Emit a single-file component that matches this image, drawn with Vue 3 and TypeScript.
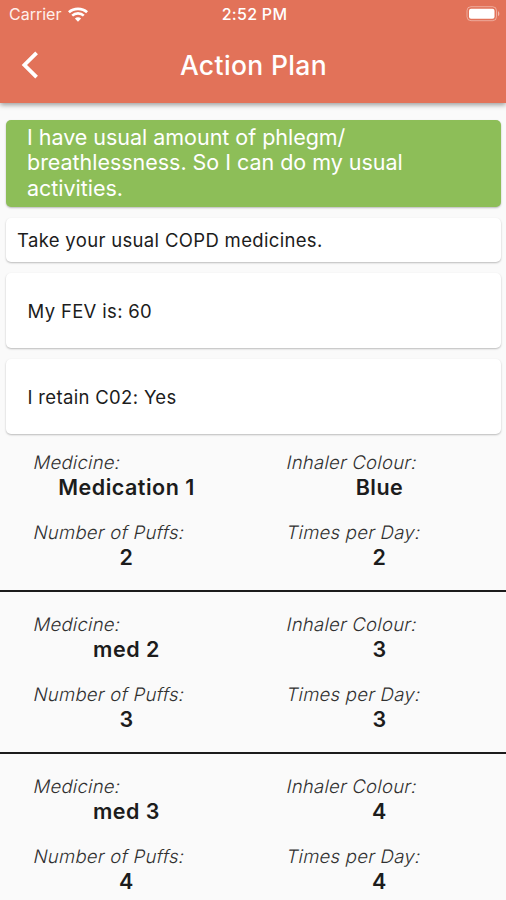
<script setup lang="ts">
interface Medicine {
  name: string
  colour: string
  puffs: string
  times: string
}

const summary: string[] = ['I have usual amount of phlegm/', 'breathlessness. So I can do my usual', 'activities.']

const medicines: Medicine[] = [
  { name: 'Medication 1', colour: 'Blue', puffs: '2', times: '2' },
  { name: 'med 2', colour: '3', puffs: '3', times: '3' },
  { name: 'med 3', colour: '4', puffs: '4', times: '4' },
]
</script>

<template>
  <div class="screen">
    <header class="app-bar">
      <div class="status">
        <div class="network">
          <span class="carrier">Carrier</span>
          <svg class="wifi" width="20" height="15" viewBox="0 0 20 15" fill="none" stroke="#fff">
            <path d="M.9 5.2C5.800.7 14.200.7 19.100 5.200" stroke-width="2.800" />
            <path d="M4.200 8.600c3.200-3 8.400-3 11.600 0" stroke-width="2.600" />
            <path d="M6.900 11.400c1.800-1.600 4.400-1.600 6.200 0L10 14.700z" fill="#fff" stroke="none" />
          </svg>
        </div>
        <span class="clock">2:52 PM</span>
        <svg class="battery" width="34" height="16" viewBox="0 0 34 16">
          <rect x="1" y=".7" width="29.500" height="14" rx="4" fill="none" stroke="#fff" stroke-opacity=".4" />
          <rect x="3" y="2.700" width="25.500" height="10" rx="2" fill="#fff" />
          <path d="M32 5.300c1.800.6 1.800 4.200 0 4.800z" fill="#fff" fill-opacity=".5" />
        </svg>
      </div>
      <div class="toolbar">
        <button class="back" aria-label="Back">
          <svg width="18" height="28" viewBox="0 0 18 28" fill="none" stroke="#fff" stroke-width="3.800">
            <path d="M16.600 1.800 4.400 14l12.200 12.200" />
          </svg>
        </button>
        <h1 class="title">Action Plan</h1>
      </div>
    </header>

    <main>
      <section class="cards">
        <p class="card status-card">
          <span v-for="line in summary" :key="line">{{ line }}</span>
        </p>
        <p class="card advice">Take your usual COPD medicines.</p>
        <p class="card fact">My FEV is: 60</p>
        <p class="card fact">I retain C02: Yes</p>
      </section>

      <section v-for="item in medicines" :key="item.name" class="medicine">
        <div class="field">
          <span class="label">Medicine:</span>
          <span class="value">{{ item.name }}</span>
        </div>
        <div class="field">
          <span class="label">Inhaler Colour:</span>
          <span class="value">{{ item.colour }}</span>
        </div>
        <div class="field">
          <span class="label">Number of Puffs:</span>
          <span class="value">{{ item.puffs }}</span>
        </div>
        <div class="field">
          <span class="label">Times per Day:</span>
          <span class="value">{{ item.times }}</span>
        </div>
      </section>
    </main>
  </div>
</template>

<style>
body {
  margin: 0;
  background: #fafafa;
}
</style>

<style scoped>
.screen {
  height: 900px;
  overflow: hidden;
  background: #fafafa;
  color: #1c1c1c;
  font-family: Inter, "Liberation Sans", sans-serif;
}
.app-bar {
  height: 102.500px;
  background: #e27259;
  color: #fff;
  box-shadow: 0 2px 5px rgba(0, 0, 0, 0.38);
  position: relative;
}
.status {
  height: 28px;
  display: grid;
  grid-template-columns: 1fr auto 1fr;
  align-items: center;
  padding: 0 6px 0 9px;
}
.network {
  display: flex;
  align-items: center;
  gap: 7px;
}
.carrier {
  font-size: 16px;
  color: #fff0ec;
}
.clock {
  font-size: 16px;
  font-weight: 500;
  letter-spacing: 0.3px;
}
.battery {
  justify-self: end;
}
.toolbar {
  height: 74px;
  display: grid;
  grid-template-columns: 60px 1fr 60px;
  align-items: center;
}
.back {
  margin: 0 0 0 20px;
  padding: 0;
  border: 0;
  background: none;
  width: 18px;
  height: 28px;
}
.title {
  margin: 0;
  padding-left: 1px;
  text-align: center;
  font-size: 26.500px;
  font-weight: 500;
  letter-spacing: 0.35px;
}
.cards {
  padding: 17px 5px 0 6px;
  display: flex;
  flex-direction: column;
  gap: 11px;
}
.card {
  margin: 0;
  border-radius: 5px;
  background: #fff;
  box-shadow: 0 1px 2px rgba(0, 0, 0, 0.26);
  font-size: 18.500px;
  letter-spacing: 0.33px;
  display: flex;
  align-items: center;
  white-space: nowrap;
}
.status-card {
  height: 87.500px;
  box-sizing: border-box;
  padding: 5px 21px;
  flex-direction: column;
  align-items: flex-start;
  background: #8dbe58;
  color: #fff;
  font-size: 21.500px;
  line-height: 25.700px;
  letter-spacing: -0.03px;
}
.advice {
  height: 44px;
  padding-left: 11px;
}
.fact {
  height: 75px;
  padding-left: 21.500px;
}
.medicine {
  height: 162px;
  box-sizing: border-box;
  padding-top: 20px;
  border-bottom: 2px solid #1c1c1c;
  display: grid;
  grid-template-columns: 1fr 1fr;
  grid-template-rows: 70px 70px;
}
.cards + .medicine {
  height: 158px;
  padding-top: 15.500px;
}
.field {
  display: flex;
  flex-direction: column;
}
.label {
  align-self: flex-start;
  margin-left: 34px;
  color: #303030;
  font-size: 18.500px;
  line-height: 24px;
  font-weight: 300;
  letter-spacing: 0.27px;
  transform: skewX(-12deg);
}
.value {
  text-align: center;
  font-size: 21.500px;
  line-height: 26px;
  font-weight: 600;
  letter-spacing: 0.5px;
}
</style>
